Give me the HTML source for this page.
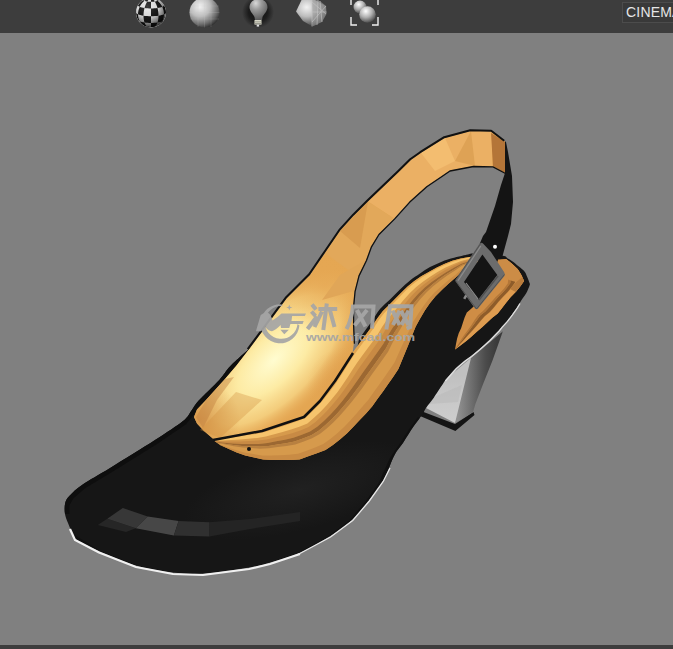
<!DOCTYPE html>
<html><head><meta charset="utf-8">
<style>
html,body{margin:0;padding:0;width:673px;height:649px;overflow:hidden;background:#808080;font-family:"Liberation Sans",sans-serif;}
#hdr{position:absolute;left:0;top:0;width:673px;height:33px;background:#3d3d3d;}
#ftr{position:absolute;left:0;top:645px;width:673px;height:4px;background:#3d3d3d;}
#cin{position:absolute;left:622px;top:2px;width:60px;height:21px;border:1px solid #4c4c4c;background:#393939;box-sizing:border-box;}
#cint{position:absolute;left:626px;top:4px;color:#e6e6e6;font-size:14px;line-height:16px;letter-spacing:0.2px;}
svg{position:absolute;left:0;top:0;}
</style></head><body>
<div id="hdr"></div>
<div id="cin"></div>
<div id="cint">CINEMA</div>
<div id="ftr"></div>
<svg width="673" height="649" viewBox="0 0 673 649">
<defs>
  <radialGradient id="ball" cx="0.35" cy="0.3" r="0.75">
    <stop offset="0" stop-color="#f2f2f2"/><stop offset="0.45" stop-color="#bdbdbd"/><stop offset="0.8" stop-color="#6a6a6a"/><stop offset="1" stop-color="#2e2e2e"/>
  </radialGradient>
  <radialGradient id="ball2" cx="0.4" cy="0.3" r="0.75">
    <stop offset="0" stop-color="#ffffff"/><stop offset="0.5" stop-color="#b0b0b0"/><stop offset="1" stop-color="#404040"/>
  </radialGradient>
  <radialGradient id="halo" cx="0.5" cy="0.5" r="0.5">
    <stop offset="0" stop-color="#101010"/><stop offset="0.6" stop-color="#1c1c1c"/><stop offset="1" stop-color="#3d3d3d"/>
  </radialGradient>
  <radialGradient id="lin" cx="274" cy="360" r="105" gradientUnits="userSpaceOnUse" gradientTransform="translate(274 360) rotate(-45) scale(1.1 0.52) translate(-274 -360)">
    <stop offset="0" stop-color="#fffcd0" stop-opacity="1"/><stop offset="0.4" stop-color="#fdeba4" stop-opacity="1"/><stop offset="0.72" stop-color="#f7d686" stop-opacity="0.8"/><stop offset="1" stop-color="#eab260" stop-opacity="0"/>
  </radialGradient>
  <linearGradient id="heelL" x1="0" y1="375" x2="0" y2="420" gradientUnits="userSpaceOnUse">
    <stop offset="0" stop-color="#c0c0c0"/><stop offset="0.5" stop-color="#c8c8c8"/><stop offset="1" stop-color="#cdcdcd"/>
  </linearGradient>
  <linearGradient id="heelD" x1="458" y1="0" x2="497" y2="0" gradientUnits="userSpaceOnUse">
    <stop offset="0" stop-color="#909090"/><stop offset="0.35" stop-color="#6e6e6e"/><stop offset="0.7" stop-color="#4c4c4c"/><stop offset="1" stop-color="#3a3a3a"/>
  </linearGradient>
  <clipPath id="bodyclip"><path d="M297.5,290.0 C297.5,290.0 249.0,349.0 249.0,349.0 C249.0,349.0 235.3,360.9 230.4,366.0 C225.5,371.1 224.6,374.1 219.3,379.9 C214.0,385.7 203.1,395.6 198.5,400.7 C193.9,405.8 194.1,407.0 191.5,410.4 C188.9,413.8 189.1,416.1 183.0,421.0 C176.9,425.9 167.1,432.2 155.0,440.0 C142.9,447.8 122.5,460.3 110.5,467.7 C98.5,475.1 89.5,479.8 82.7,484.4 C75.9,489.0 72.7,492.4 69.8,495.5 C66.9,498.6 66.0,499.9 65.2,503.0 C64.4,506.1 64.5,510.7 65.0,514.0 C65.5,517.3 66.7,519.7 68.0,523.0 C69.3,526.3 71.3,531.3 72.6,534.0 C73.9,536.7 71.6,536.2 76.0,539.0 C80.4,541.8 89.0,546.6 99.0,551.0 C109.0,555.4 123.7,561.9 136.0,565.5 C148.3,569.1 161.8,571.2 173.0,572.5 C184.2,573.8 190.3,574.3 203.0,573.5 C215.7,572.7 237.8,569.3 249.0,567.5 C260.2,565.7 261.5,565.0 270.0,562.5 C278.5,560.0 289.9,557.0 300.0,552.5 C310.1,548.0 321.7,541.3 330.5,535.8 C339.3,530.2 346.2,525.2 352.7,519.2 C359.2,513.2 364.2,506.3 369.3,499.8 C374.4,493.3 379.0,487.8 383.2,480.4 C387.4,473.0 390.9,461.8 394.3,455.4 C397.7,449.0 400.4,446.7 403.6,441.9 C406.8,437.1 410.2,431.3 413.3,426.8 C416.4,422.3 419.8,418.2 422.0,415.0 C424.2,411.8 424.3,410.3 426.3,407.4 C428.3,404.5 430.6,402.3 433.8,397.7 C437.0,393.1 445.4,380.0 445.4,380.0 C445.4,380.0 452.9,371.0 456.2,367.7 C459.5,364.4 462.7,362.1 465.3,360.0 C467.9,357.9 469.2,357.3 471.6,355.4 C474.1,353.5 476.9,351.1 480.0,348.5 C483.1,345.9 486.8,342.6 490.0,339.5 C493.2,336.4 497.2,332.1 499.2,330.0 C501.2,327.9 500.5,328.2 501.9,326.6 C503.3,325.0 505.8,322.5 507.5,320.4 C509.2,318.3 510.7,316.3 512.3,314.1 C513.9,311.9 515.7,309.5 517.2,307.2 C518.7,304.9 519.9,302.6 521.4,300.3 C522.9,298.0 524.8,295.9 526.2,293.3 C527.6,290.8 529.2,286.7 529.7,285.0 C530.2,283.3 529.9,284.4 529.5,283.0 C529.1,281.6 527.9,278.6 527.1,276.7 C526.3,274.8 526.1,273.4 524.7,271.7 C523.3,269.9 520.6,267.9 518.5,266.2 C516.4,264.4 514.1,262.5 512.3,261.2 C510.4,259.9 509.0,259.1 507.4,258.2 C505.8,257.3 507.9,256.5 502.5,255.7 C497.1,254.9 480.8,253.7 475.0,253.5 C469.2,253.3 472.0,253.6 467.8,254.5 C463.6,255.4 454.6,257.5 450.0,258.8 C445.4,260.1 443.3,261.1 440.0,262.5 C436.7,263.9 433.3,265.3 430.0,267.1 C426.7,268.9 423.3,271.3 420.0,273.5 C416.7,275.7 413.3,277.8 410.0,280.5 C406.7,283.2 403.3,286.3 400.0,289.5 C396.7,292.7 393.3,296.2 390.0,299.5 C386.7,302.8 383.2,305.2 380.0,309.0 C376.8,312.8 374.3,317.8 371.0,322.5 C367.7,327.2 363.7,332.4 360.0,337.5 C356.3,342.6 359.4,360.9 349.0,353.0 C338.6,345.1 297.5,290.0 297.5,290.0Z"/></clipPath>
  <radialGradient id="shade" cx="0.38" cy="0.3" r="0.75">
    <stop offset="0" stop-color="#ffffff" stop-opacity="0.15"/><stop offset="0.45" stop-color="#000" stop-opacity="0.1"/><stop offset="0.8" stop-color="#000" stop-opacity="0.55"/><stop offset="1" stop-color="#000" stop-opacity="0.85"/>
  </radialGradient>
  <radialGradient id="bulb" cx="0.35" cy="0.2" r="0.8">
    <stop offset="0" stop-color="#d8d8d8"/><stop offset="0.4" stop-color="#9a9a9a"/><stop offset="1" stop-color="#5a5a5a"/>
  </radialGradient>
  <radialGradient id="bodyhl" cx="0.5" cy="0.5" r="0.5">
    <stop offset="0" stop-color="#222" stop-opacity="0.9"/><stop offset="1" stop-color="#222" stop-opacity="0"/>
  </radialGradient>
  <clipPath id="linclip"><polygon points="215.0,440.5 203.5,430.5 197.0,423.5 194.0,417.0 197.0,409.5 206.5,399.5 225.0,379.0 236.5,365.5 248.5,350.0 273.0,317.0 287.0,298.0 310.0,275.0 325.0,253.0 340.0,231.0 354.0,215.5 368.0,201.6 398.6,172.3 411.0,160.0 421.0,153.0 445.0,138.0 471.0,131.0 492.0,131.5 505.0,141.5 505.0,173.0 492.5,166.4 473.0,166.0 449.5,170.5 440.0,177.0 426.3,186.2 409.3,201.6 394.0,218.6 378.5,234.0 371.0,246.3 366.0,260.0 358.5,275.4 354.6,290.8 353.1,306.2 353.1,324.7 353.9,343.2 352.0,357.0 335.4,380.8 320.0,400.9 304.2,416.8 261.7,431.5 215.0,440.5"/></clipPath>
  <radialGradient id="shTop" cx="0.5" cy="0.5" r="0.5"><stop offset="0" stop-color="#e6a854" stop-opacity="0.75"/><stop offset="1" stop-color="#e6a854" stop-opacity="0"/></radialGradient>
  <radialGradient id="shLL" cx="0.5" cy="0.5" r="0.5"><stop offset="0" stop-color="#d4944a" stop-opacity="0.8"/><stop offset="1" stop-color="#d4944a" stop-opacity="0"/></radialGradient>
  <radialGradient id="shR" cx="0.5" cy="0.5" r="0.5"><stop offset="0" stop-color="#e0a050" stop-opacity="0.7"/><stop offset="1" stop-color="#e0a050" stop-opacity="0"/></radialGradient>
  <clipPath id="ckb"><circle cx="151" cy="12.5" r="15"/></clipPath>
</defs>

<!-- ===== toolbar icons ===== -->
<g clip-path="url(#ckb)">
  <rect x="134" y="-4" width="34" height="34" fill="#f0f0f0"/>
  <g fill="#1c1c1c"><polygon points="151.00,27.03 151.00,27.03 151.00,27.03 151.00,27.03 151.00,27.03 151.00,27.03 149.30,27.15 147.64,27.02 146.03,26.64 144.50,26.01 144.50,26.01 144.07,25.80 143.76,25.57 143.56,25.33 143.50,25.09 143.50,25.09 145.26,25.93 147.12,26.54 149.04,26.91 151.00,27.03"/>
<polygon points="138.01,19.77 138.12,20.19 138.45,20.60 139.00,21.00 139.75,21.37 139.75,21.37 139.00,19.78 138.45,18.05 138.12,16.24 138.01,14.36 138.01,14.36 137.14,13.92 136.51,13.46 136.13,12.98 136.00,12.50 136.00,12.50 136.13,14.40 136.51,16.26 137.14,18.06 138.01,19.77"/>
<polygon points="138.01,5.23 138.12,5.65 138.45,6.06 139.00,6.46 139.75,6.84 139.75,6.84 140.69,5.12 141.81,3.54 143.09,2.10 144.50,0.84 144.50,0.84 144.07,0.62 143.76,0.39 143.56,0.16 143.50,-0.09 143.50,-0.09 141.87,0.97 140.39,2.22 139.10,3.65 138.01,5.23"/>
<polygon points="144.50,26.01 145.05,26.22 145.70,26.40 146.43,26.56 147.25,26.69 147.25,26.69 146.43,25.99 145.70,25.05 145.05,23.90 144.50,22.55 144.50,22.55 143.09,22.32 141.81,22.04 140.69,21.72 139.75,21.37 139.75,21.37 140.69,22.82 141.81,24.09 143.09,25.16 144.50,26.01"/>
<polygon points="138.01,14.36 139.10,14.76 140.39,15.12 141.87,15.44 143.50,15.71 143.50,15.71 143.56,13.79 143.76,11.84 144.07,9.91 144.50,8.02 144.50,8.02 143.09,7.78 141.81,7.51 140.69,7.19 139.75,6.84 139.75,6.84 139.00,8.65 138.45,10.53 138.12,12.44 138.01,14.36"/>
<polygon points="144.50,0.84 145.05,1.04 145.70,1.23 146.43,1.39 147.25,1.52 147.25,1.52 148.13,0.30 149.06,-0.71 150.02,-1.49 151.00,-2.03 151.00,-2.03 151.00,-2.03 151.00,-2.03 151.00,-2.03 151.00,-2.03 151.00,-2.03 149.30,-1.67 147.64,-1.06 146.03,-0.22 144.50,0.84"/>
<polygon points="151.00,27.03 151.00,27.03 151.00,27.03 151.00,27.03 151.00,27.03 151.00,27.03 151.00,27.39 151.00,27.50 151.00,27.35 151.00,26.94 151.00,26.94 150.02,26.93 149.06,26.88 148.13,26.80 147.25,26.69 147.25,26.69 148.13,27.16 149.06,27.37 150.02,27.33 151.00,27.03"/>
<polygon points="144.50,22.55 146.03,22.74 147.64,22.87 149.30,22.95 151.00,22.98 151.00,22.98 151.00,21.49 151.00,19.85 151.00,18.08 151.00,16.21 151.00,16.21 149.04,16.18 147.12,16.08 145.26,15.93 143.50,15.71 143.50,15.71 143.56,17.58 143.76,19.37 144.07,21.03 144.50,22.55"/>
<polygon points="144.50,8.02 146.03,8.20 147.64,8.34 149.30,8.42 151.00,8.45 151.00,8.45 151.00,6.60 151.00,4.85 151.00,3.23 151.00,1.77 151.00,1.77 150.02,1.75 149.06,1.71 148.13,1.63 147.25,1.52 147.25,1.52 146.43,2.93 145.70,4.50 145.05,6.20 144.50,8.02"/>
<polygon points="151.00,26.94 151.98,26.93 152.94,26.88 153.87,26.80 154.75,26.69 154.75,26.69 155.57,25.99 156.30,25.05 156.95,23.90 157.50,22.55 157.50,22.55 155.97,22.74 154.36,22.87 152.70,22.95 151.00,22.98 151.00,22.98 151.00,24.29 151.00,25.40 151.00,26.29 151.00,26.94"/>
<polygon points="151.00,16.21 152.96,16.18 154.88,16.08 156.74,15.93 158.50,15.71 158.50,15.71 158.44,13.79 158.24,11.84 157.93,9.91 157.50,8.02 157.50,8.02 155.97,8.20 154.36,8.34 152.70,8.42 151.00,8.45 151.00,8.45 151.00,10.37 151.00,12.32 151.00,14.28 151.00,16.21"/>
<polygon points="151.00,1.77 151.98,1.75 152.94,1.71 153.87,1.63 154.75,1.52 154.75,1.52 153.87,0.30 152.94,-0.71 151.98,-1.49 151.00,-2.03 151.00,-2.03 151.00,-2.03 151.00,-2.03 151.00,-2.03 151.00,-2.03 151.00,-2.03 151.00,-1.42 151.00,-0.58 151.00,0.49 151.00,1.77"/>
<polygon points="151.00,27.03 151.00,27.03 151.00,27.03 151.00,27.03 151.00,27.03 151.00,27.03 152.70,27.15 154.36,27.02 155.97,26.64 157.50,26.01 157.50,26.01 156.95,26.22 156.30,26.40 155.57,26.56 154.75,26.69 154.75,26.69 153.87,27.16 152.94,27.37 151.98,27.33 151.00,27.03"/>
<polygon points="157.50,22.55 158.91,22.32 160.19,22.04 161.31,21.72 162.25,21.37 162.25,21.37 163.00,19.78 163.55,18.05 163.88,16.24 163.99,14.36 163.99,14.36 162.90,14.76 161.61,15.12 160.13,15.44 158.50,15.71 158.50,15.71 158.44,17.58 158.24,19.37 157.93,21.03 157.50,22.55"/>
<polygon points="157.50,8.02 158.91,7.78 160.19,7.51 161.31,7.19 162.25,6.84 162.25,6.84 161.31,5.12 160.19,3.54 158.91,2.10 157.50,0.84 157.50,0.84 156.95,1.04 156.30,1.23 155.57,1.39 154.75,1.52 154.75,1.52 155.57,2.93 156.30,4.50 156.95,6.20 157.50,8.02"/>
<polygon points="157.50,26.01 157.93,25.80 158.24,25.57 158.44,25.33 158.50,25.09 158.50,25.09 160.13,24.03 161.61,22.78 162.90,21.35 163.99,19.77 163.99,19.77 163.88,20.19 163.55,20.60 163.00,21.00 162.25,21.37 162.25,21.37 161.31,22.82 160.19,24.09 158.91,25.16 157.50,26.01"/>
<polygon points="163.99,14.36 164.86,13.92 165.49,13.46 165.87,12.98 166.00,12.50 166.00,12.50 165.87,10.60 165.49,8.74 164.86,6.94 163.99,5.23 163.99,5.23 163.88,5.65 163.55,6.06 163.00,6.46 162.25,6.84 162.25,6.84 163.00,8.65 163.55,10.53 163.88,12.44 163.99,14.36"/>
<polygon points="157.50,0.84 157.93,0.62 158.24,0.39 158.44,0.16 158.50,-0.09 158.50,-0.09 156.74,-0.93 154.88,-1.54 152.96,-1.91 151.00,-2.03 151.00,-2.03 151.00,-2.03 151.00,-2.03 151.00,-2.03 151.00,-2.03 151.00,-2.03 152.70,-1.67 154.36,-1.06 155.97,-0.22 157.50,0.84"/></g>
  <circle cx="151" cy="12.5" r="15" fill="url(#shade)"/>
</g>
<circle cx="204.5" cy="12.5" r="15" fill="url(#ball)"/>
<g stroke="#c8c8c8" stroke-width="0.5" fill="none" opacity="0.35">
  <path d="M190,6 H219 M189.5,12.5 H219.5 M190,19 H219 M198,-2 V27 M204.5,-2.5 V27.5 M211,-2 V27"/>
</g>
<circle cx="258" cy="12" r="16" fill="url(#halo)"/>
<path d="M258.5,-1 C264,-1 267.5,3 267.5,7 C267.5,11 264,14 262.5,17 L262,20 L255,20 L254.5,17 C253,14 249.5,11 249.5,7 C249.5,3 253,-1 258.5,-1 Z" fill="url(#bulb)"/>
<rect x="254.5" y="20" width="7" height="4.6" fill="#d8d8c8"/>
<rect x="254.5" y="21.5" width="7" height="0.8" fill="#8a8a80"/><rect x="254.5" y="23" width="7" height="0.8" fill="#8a8a80"/>
<rect x="256.7" y="24.6" width="2.4" height="2" fill="#e0e0e0"/>
<polygon points="302,-1 313,-1 326,6 326.5,14 322,22 312.5,26.5 303,21 296,11.5" fill="url(#ball)"/>
<polygon points="312,-1 320,1 326,6 326.5,14 322,22 312.5,26.5" fill="#9a9a9a" opacity="0.6"/>
<g stroke="#c4c4c4" stroke-width="0.7" fill="none" opacity="0.9">
  <path d="M312,-1 V26.5 M312,12 H326.5 M312,2 L326,14 M312,22 L326,6 M318,0 L317,25 M320,1 L322,22"/>
</g>
<g stroke="#f0f0f0" stroke-width="1.4" fill="none">
  <path d="M351,0 V5 M378,0 V5 M351,17 V25 H357 M378,17 V25 H372"/>
</g>
<circle cx="360" cy="7" r="6.5" fill="url(#ball2)"/>
<circle cx="367.5" cy="14.5" r="8.3" fill="url(#ball2)"/>

<!-- ===== heel ===== -->
<polygon points="421,411 455,424 473.5,412 474.5,415 455.4,431 420,416" fill="#141414"/>
<polygon points="445,380 472,357 503,331 455,423 426,408" fill="url(#heelL)"/>
<polygon fill="#b8b8b8" opacity="0.5" points="432,398 462,385 458,402 428,404"/>
<polygon points="471,358 503,331 492.4,360.8 483.1,383.9 475.4,404 473.1,412 455,423" fill="url(#heelD)"/>

<!-- ===== black body ===== -->
<path fill="#161616" d="M297.5,290.0 C297.5,290.0 249.0,349.0 249.0,349.0 C249.0,349.0 235.3,360.9 230.4,366.0 C225.5,371.1 224.6,374.1 219.3,379.9 C214.0,385.7 203.1,395.6 198.5,400.7 C193.9,405.8 194.1,407.0 191.5,410.4 C188.9,413.8 189.1,416.1 183.0,421.0 C176.9,425.9 167.1,432.2 155.0,440.0 C142.9,447.8 122.5,460.3 110.5,467.7 C98.5,475.1 89.5,479.8 82.7,484.4 C75.9,489.0 72.7,492.4 69.8,495.5 C66.9,498.6 66.0,499.9 65.2,503.0 C64.4,506.1 64.5,510.7 65.0,514.0 C65.5,517.3 66.7,519.7 68.0,523.0 C69.3,526.3 71.3,531.3 72.6,534.0 C73.9,536.7 71.6,536.2 76.0,539.0 C80.4,541.8 89.0,546.6 99.0,551.0 C109.0,555.4 123.7,561.9 136.0,565.5 C148.3,569.1 161.8,571.2 173.0,572.5 C184.2,573.8 190.3,574.3 203.0,573.5 C215.7,572.7 237.8,569.3 249.0,567.5 C260.2,565.7 261.5,565.0 270.0,562.5 C278.5,560.0 289.9,557.0 300.0,552.5 C310.1,548.0 321.7,541.3 330.5,535.8 C339.3,530.2 346.2,525.2 352.7,519.2 C359.2,513.2 364.2,506.3 369.3,499.8 C374.4,493.3 379.0,487.8 383.2,480.4 C387.4,473.0 390.9,461.8 394.3,455.4 C397.7,449.0 400.4,446.7 403.6,441.9 C406.8,437.1 410.2,431.3 413.3,426.8 C416.4,422.3 419.8,418.2 422.0,415.0 C424.2,411.8 424.3,410.3 426.3,407.4 C428.3,404.5 430.6,402.3 433.8,397.7 C437.0,393.1 445.4,380.0 445.4,380.0 C445.4,380.0 452.9,371.0 456.2,367.7 C459.5,364.4 462.7,362.1 465.3,360.0 C467.9,357.9 469.2,357.3 471.6,355.4 C474.1,353.5 476.9,351.1 480.0,348.5 C483.1,345.9 486.8,342.6 490.0,339.5 C493.2,336.4 497.2,332.1 499.2,330.0 C501.2,327.9 500.5,328.2 501.9,326.6 C503.3,325.0 505.8,322.5 507.5,320.4 C509.2,318.3 510.7,316.3 512.3,314.1 C513.9,311.9 515.7,309.5 517.2,307.2 C518.7,304.9 519.9,302.6 521.4,300.3 C522.9,298.0 524.8,295.9 526.2,293.3 C527.6,290.8 529.2,286.7 529.7,285.0 C530.2,283.3 529.9,284.4 529.5,283.0 C529.1,281.6 527.9,278.6 527.1,276.7 C526.3,274.8 526.1,273.4 524.7,271.7 C523.3,269.9 520.6,267.9 518.5,266.2 C516.4,264.4 514.1,262.5 512.3,261.2 C510.4,259.9 509.0,259.1 507.4,258.2 C505.8,257.3 507.9,256.5 502.5,255.7 C497.1,254.9 480.8,253.7 475.0,253.5 C469.2,253.3 472.0,253.6 467.8,254.5 C463.6,255.4 454.6,257.5 450.0,258.8 C445.4,260.1 443.3,261.1 440.0,262.5 C436.7,263.9 433.3,265.3 430.0,267.1 C426.7,268.9 423.3,271.3 420.0,273.5 C416.7,275.7 413.3,277.8 410.0,280.5 C406.7,283.2 403.3,286.3 400.0,289.5 C396.7,292.7 393.3,296.2 390.0,299.5 C386.7,302.8 383.2,305.2 380.0,309.0 C376.8,312.8 374.3,317.8 371.0,322.5 C367.7,327.2 363.7,332.4 360.0,337.5 C356.3,342.6 359.4,360.9 349.0,353.0 C338.6,345.1 297.5,290.0 297.5,290.0Z"/>
<g clip-path="url(#bodyclip)">
<ellipse cx="300" cy="490" rx="120" ry="40" fill="url(#bodyhl)" transform="rotate(-15 300 490)"/>
<path fill="none" stroke="#0f0f0f" stroke-width="10" opacity="0.8" d="M70,538 L99,556 L136,570.5 L173,577.5 L203,578.5 L249,572.5 L270,567.5 L300,557.5 L330.5,540.8 L352.7,524.2 L369.3,504.8 L383.2,485.4 L394.3,460.4 L403.6,446.9 L413.3,431.8 L422,420"/>
<path fill="none" stroke="#0e0e0e" stroke-width="9" d="M250,345 L219.3,379.9 L191.5,410.4 L183,421 L155,440 L110.5,467.7 L82.7,484.4 L69.8,495.5 L65,504 L65,514"/></g>
<!-- sole white line -->
<polyline fill="none" stroke="#f0f0f0" stroke-width="2.2" points="70,529 75,540 99,552.5 136,567 173,574 203,575 249,569 270,564 300,554"/>
<polyline fill="none" stroke="#e8e8e8" stroke-width="1.3" points="298,554.5 330.5,537 352.7,520.5 369.3,501 383.2,481.5 390,468"/>
<polyline fill="none" stroke="#e0e0e0" stroke-width="1.3" points="445.4,381 456.2,368.7 465.3,361 471.6,356.4 480,349.5 490,340.5 499.2,331 501.9,327.6 507.5,321.4 512.3,315.1 517.2,308.2 520,303.5"/>
<!-- toe highlights -->
<polygon fill="#262626" points="107.3,518.7 135.8,528.2 126,532 97.8,525"/>
<polygon fill="#373737" points="122.8,508 147.7,516.4 135.8,528.2 107.3,518.7"/>
<polygon fill="#474747" points="147.7,516.4 178.6,521.1 173.9,535.4 135.8,528.2"/>
<polygon fill="#303030" points="178.6,521.1 209.5,522.3 209.5,536.6 173.9,535.4"/>
<polygon fill="#242424" points="209.5,522.3 250,519 300,512 300,521 250,529 209.5,536.6"/>

<!-- strap black -->
<polygon fill="#141414" points="491,131 506,142 508,152 512,176 513,202 511,224 508,236 502,258 475,255 483,236 486,232 495,206 501,185 505,173"/>

<!-- ===== lining + strap + near band ===== -->
<polygon fill="#e4a652" points="215.0,440.5 203.5,430.5 197.0,423.5 194.0,417.0 197.0,409.5 206.5,399.5 225.0,379.0 236.5,365.5 248.5,350.0 273.0,317.0 287.0,298.0 310.0,275.0 325.0,253.0 340.0,231.0 354.0,215.5 368.0,201.6 398.6,172.3 411.0,160.0 421.0,153.0 445.0,138.0 471.0,131.0 492.0,131.5 505.0,141.5 505.0,173.0 492.5,166.4 473.0,166.0 449.5,170.5 440.0,177.0 426.3,186.2 409.3,201.6 394.0,218.6 378.5,234.0 371.0,246.3 366.0,260.0 358.5,275.4 354.6,290.8 353.1,306.2 353.1,324.7 353.9,343.2 352.0,357.0 335.4,380.8 320.0,400.9 304.2,416.8 261.7,431.5 215.0,440.5"/>
<polygon fill="url(#lin)" points="215.0,440.5 203.5,430.5 197.0,423.5 194.0,417.0 197.0,409.5 206.5,399.5 225.0,379.0 236.5,365.5 248.5,350.0 273.0,317.0 287.0,298.0 310.0,275.0 325.0,253.0 340.0,231.0 354.0,215.5 368.0,201.6 398.6,172.3 411.0,160.0 421.0,153.0 445.0,138.0 471.0,131.0 492.0,131.5 505.0,141.5 505.0,173.0 492.5,166.4 473.0,166.0 449.5,170.5 440.0,177.0 426.3,186.2 409.3,201.6 394.0,218.6 378.5,234.0 371.0,246.3 366.0,260.0 358.5,275.4 354.6,290.8 353.1,306.2 353.1,324.7 353.9,343.2 352.0,357.0 335.4,380.8 320.0,400.9 304.2,416.8 261.7,431.5 215.0,440.5"/>
<g clip-path="url(#linclip)">
  <circle cx="325" cy="285" r="50" fill="url(#shTop)"/>
  <circle cx="200" cy="420" r="40" fill="url(#shLL)"/>
  <circle cx="345" cy="385" r="38" fill="url(#shR)"/>
</g>
<g><polygon fill="#d69a4c" points="212.7,439.7 221.3,438.3 229.9,436.8 238.5,435.4 247.1,433.9 255.7,432.5 264.2,430.6 272.4,427.8 280.6,425.0 288.9,422.1 297.1,419.3 305.0,415.9 311.2,409.8 317.3,403.6 323.0,397.0 328.3,390.1 333.6,383.2 338.4,375.9 342.9,368.4 347.4,361.0 352.0,353.6 357.2,346.6 362.3,339.5 367.5,332.5 372.6,325.5 377.4,318.2 382.7,311.3 388.8,305.2 395.0,299.0 401.2,292.8 407.3,286.7 414.0,281.2 421.2,276.3 428.8,271.9 436.4,267.7 444.2,263.9 452.4,260.8 460.8,258.5 469.3,256.9 478.0,256.0 478.0,262.0 470.0,266.5 462.0,271.0 455.7,277.5 448.7,283.5 442.0,289.7 435.5,296.2 429.8,303.2 424.7,310.8 420.0,318.7 415.6,326.7 412.2,335.2 408.8,343.7 405.3,352.2 401.8,360.7 398.4,369.1 393.3,376.7 388.0,384.2 382.8,391.7 377.4,399.1 372.1,406.5 366.0,413.4 359.7,420.1 353.4,426.7 347.1,433.3 340.2,439.3 332.9,444.9 325.5,450.1 316.9,453.2 308.3,456.3 299.6,459.4 290.6,460.0 281.4,460.0 272.3,460.0 263.2,459.6 254.2,457.6 245.3,455.6 236.7,452.4 228.3,448.8 220.0,445.0"/>
<polygon fill="#e0a450" points="212.7,439.7 221.3,438.3 229.9,436.8 238.5,435.4 247.1,433.9 255.7,432.5 264.2,430.6 272.4,427.8 280.6,425.0 288.9,422.1 297.1,419.3 305.0,415.9 311.2,409.8 317.3,403.6 323.0,397.0 328.3,390.1 333.6,383.2 338.4,375.9 342.9,368.4 347.4,361.0 352.0,353.6 357.2,346.6 362.3,339.5 367.5,332.5 372.6,325.5 377.4,318.2 382.7,311.3 388.8,305.2 395.0,299.0 401.2,292.8 407.3,286.7 414.0,281.2 421.2,276.3 428.8,271.9 436.4,267.7 444.2,263.9 452.4,260.8 460.8,258.5 469.3,256.9 478.0,256.0 478.0,256.3 469.4,257.3 460.8,259.2 452.5,261.7 444.5,264.9 436.7,268.8 429.1,273.1 421.7,277.6 414.6,282.7 408.0,288.3 401.9,294.5 395.9,300.8 389.8,307.1 383.8,313.4 378.6,320.3 373.9,327.7 368.8,334.7 363.6,341.8 358.5,348.8 353.3,355.9 348.6,363.2 344.0,370.7 339.4,378.1 334.6,385.3 329.2,392.2 323.9,399.1 318.1,405.6 311.9,411.8 305.6,417.8 297.7,421.1 289.4,424.0 281.1,426.7 272.8,429.4 264.6,432.1 256.0,433.9 247.4,435.1 238.8,436.4 230.2,437.6 221.6,438.8 213.1,440.0"/>
<polygon fill="#f6c46c" points="213.1,440.0 221.6,438.8 230.2,437.6 238.8,436.4 247.4,435.1 256.0,433.9 264.6,432.1 272.8,429.4 281.1,426.7 289.4,424.0 297.7,421.1 305.6,417.8 311.9,411.8 318.1,405.6 323.9,399.1 329.2,392.2 334.6,385.3 339.4,378.1 344.0,370.7 348.6,363.2 353.3,355.9 358.5,348.8 363.6,341.8 368.8,334.7 373.9,327.7 378.6,320.3 383.8,313.4 389.8,307.1 395.9,300.8 401.9,294.5 408.0,288.3 414.6,282.7 421.7,277.6 429.1,273.1 436.7,268.8 444.5,264.9 452.5,261.7 460.8,259.2 469.4,257.3 478.0,256.3 478.0,257.2 469.5,258.8 461.0,261.0 453.0,264.2 445.1,267.8 437.5,272.1 430.1,276.8 422.9,281.7 416.2,287.1 409.9,293.1 404.0,299.6 398.4,306.2 392.8,312.9 387.2,319.5 382.2,326.7 377.8,334.2 372.7,341.4 367.5,348.5 362.3,355.6 357.1,362.7 352.3,370.1 347.5,377.4 342.6,384.7 337.6,391.9 332.1,398.7 326.4,405.4 320.5,411.8 314.0,417.8 307.4,423.4 299.3,426.7 291.0,429.6 282.6,432.0 274.2,434.2 265.8,436.5 257.2,437.9 248.5,438.7 239.9,439.4 231.3,439.9 222.7,440.4 214.2,440.8"/>
<polygon fill="#c88a44" points="214.9,441.3 223.4,441.4 231.9,441.5 240.5,441.4 249.2,441.0 257.9,440.6 266.6,439.5 275.1,437.5 283.6,435.5 292.1,433.3 300.4,430.4 308.6,427.1 315.5,421.9 322.0,416.0 328.1,409.7 333.9,403.0 339.5,396.2 344.8,389.1 349.8,381.9 354.8,374.6 359.6,367.3 364.9,360.1 370.0,352.9 375.2,345.8 380.4,338.6 384.7,330.9 389.5,323.6 394.8,316.7 400.1,309.9 405.5,303.0 411.1,296.3 417.2,290.1 423.8,284.4 430.8,279.2 438.1,274.3 445.6,269.8 453.4,265.8 461.2,262.3 469.5,259.7 478.0,257.8 478.0,258.5 469.6,260.9 461.3,263.8 453.8,267.8 446.1,272.2 438.8,276.9 431.6,282.1 424.8,287.6 418.5,293.6 412.7,300.1 407.2,307.1 402.2,314.2 397.2,321.4 392.2,328.5 387.6,336.0 383.4,343.8 378.3,351.1 373.1,358.3 367.9,365.5 362.7,372.7 357.7,380.1 352.6,387.3 347.3,394.4 341.9,401.4 336.2,408.2 330.2,414.7 323.9,420.9 317.2,426.7 310.0,431.6 301.8,434.8 293.4,437.8 284.8,439.7 276.2,441.3 267.6,443.0 258.8,443.9 250.1,443.9 241.4,443.9 232.8,443.4 224.2,442.7 215.8,441.9"/>
<polygon fill="#9c6832" points="215.8,441.9 224.2,442.7 232.8,443.4 241.4,443.9 250.1,443.9 258.8,443.9 267.6,443.0 276.2,441.3 284.8,439.7 293.4,437.8 301.8,434.8 310.0,431.6 317.2,426.7 323.9,420.9 330.2,414.7 336.2,408.2 341.9,401.4 347.3,394.4 352.6,387.3 357.7,380.1 362.7,372.7 367.9,365.5 373.1,358.3 378.3,351.1 383.4,343.8 387.6,336.0 392.2,328.5 397.2,321.4 402.2,314.2 407.2,307.1 412.7,300.1 418.5,293.6 424.8,287.6 431.6,282.1 438.8,276.9 446.1,272.2 453.8,267.8 461.3,263.8 469.6,260.9 478.0,258.5 478.0,259.1 469.7,261.9 461.4,265.0 454.1,269.5 446.6,274.1 439.3,279.1 432.3,284.5 425.7,290.3 419.6,296.6 413.9,303.3 408.6,310.5 403.9,317.8 399.2,325.2 394.4,332.6 390.1,340.3 386.0,348.2 380.9,355.5 375.7,362.8 370.5,370.0 365.2,377.3 360.2,384.7 354.9,391.8 349.5,398.9 343.9,405.8 338.1,412.6 331.9,419.0 325.4,425.1 318.6,430.7 311.2,435.3 302.9,438.5 294.5,441.5 285.8,443.2 277.1,444.5 268.4,445.9 259.6,446.6 250.8,446.2 242.0,445.9 233.4,444.9 224.9,443.8 216.5,442.5"/>
<polygon fill="#b88040" points="216.5,442.5 224.9,443.8 233.4,444.9 242.0,445.9 250.8,446.2 259.6,446.6 268.4,445.9 277.1,444.5 285.8,443.2 294.5,441.5 302.9,438.5 311.2,435.3 318.6,430.7 325.4,425.1 331.9,419.0 338.1,412.6 343.9,405.8 349.5,398.9 354.9,391.8 360.2,384.7 365.2,377.3 370.5,370.0 375.7,362.8 380.9,355.5 386.0,348.2 390.1,340.3 394.4,332.6 399.2,325.2 403.9,317.8 408.6,310.5 413.9,303.3 419.6,296.6 425.7,290.3 432.3,284.5 439.3,279.1 446.6,274.1 454.1,269.5 461.4,265.0 469.7,261.9 478.0,259.1 478.0,259.6 469.7,262.6 461.5,266.0 454.3,270.9 446.9,275.7 439.8,280.9 432.8,286.5 426.4,292.5 420.4,299.0 414.9,305.9 409.8,313.2 405.3,320.7 400.8,328.3 396.3,335.8 392.0,343.7 388.1,351.7 383.0,359.0 377.8,366.3 372.5,373.6 367.3,380.9 362.2,388.3 356.7,395.4 351.2,402.4 345.5,409.3 339.6,416.0 333.3,422.4 326.7,428.4 319.8,433.9 312.1,438.3 303.8,441.5 295.3,444.5 286.6,446.0 277.8,447.1 269.0,448.3 260.2,448.8 251.4,448.1 242.6,447.5 234.0,446.2 225.5,444.6 217.1,442.9"/>
<polygon fill="#c98b44" points="218.9,444.2 227.3,447.2 235.7,450.1 244.3,452.5 253.2,454.0 262.1,455.5 271.1,455.6 280.1,455.2 289.1,454.7 298.0,453.8 306.6,450.7 315.1,447.6 323.3,444.0 330.6,438.7 337.6,432.9 344.3,426.8 350.5,420.2 356.5,413.4 362.5,406.6 368.4,399.7 373.6,392.3 378.9,384.9 384.2,377.5 389.4,370.1 394.5,362.6 398.2,354.3 401.9,346.1 405.8,337.9 409.6,329.8 413.4,321.6 418.1,313.9 423.1,306.4 428.5,299.2 434.5,292.5 441.2,286.4 448.1,280.6 455.2,275.0 461.9,269.1 469.9,265.0 478.0,261.1 478.0,262.0 470.0,266.5 462.0,271.0 455.7,277.5 448.7,283.5 442.0,289.7 435.5,296.2 429.8,303.2 424.7,310.8 420.0,318.7 415.6,326.7 412.2,335.2 408.8,343.7 405.3,352.2 401.8,360.7 398.4,369.1 393.3,376.7 388.0,384.2 382.8,391.7 377.4,399.1 372.1,406.5 366.0,413.4 359.7,420.1 353.4,426.7 347.1,433.3 340.2,439.3 332.9,444.9 325.5,450.1 316.9,453.2 308.3,456.3 299.6,459.4 290.6,460.0 281.4,460.0 272.3,460.0 263.2,459.6 254.2,457.6 245.3,455.6 236.7,452.4 228.3,448.8 220.0,445.0"/></g>
<!-- strap facets -->
<g>
<polygon fill="#ebb064" points="368,201.6 398.6,172.3 411,160 421,153 445,138 471,131 492,131.5 492.5,166.4 473,166 449.5,170.5 440,177 426.3,186.2 409.3,201.6 394,218.6"/>
<polygon fill="#f3bd70" points="421,153 445,138 455,161 435,171"/>
<polygon fill="#dea255" points="455,161 471,131 475,166"/>
<polygon fill="#e2a85a" points="325,253 340,231 354,215.5 368,201.6 394,218.6 378.5,234 371,246.3 366,260 355,275"/>
<polygon fill="#d89c50" points="340,231 368,201.6 360,248"/>
<polygon fill="#e0a658" points="354.6,290.8 358.5,275.4 366,260 340,275 322,300"/>
<polygon fill="#c08040" opacity="0.45" points="196,417 206.5,399.5 225,379 234,377 217,400 203,428"/>
<polygon fill="#d09040" opacity="0.35" points="200,430 236,392 262,400 220,438"/>

</g>
<!-- band stripes -->

<!-- strap end face -->
<polygon fill="#b47538" points="491,133 505,142 505,173 493,166"/>
<!-- far band -->
<g><polygon fill="#cf8d45" points="500.0,260.0 506.8,259.6 512.2,263.9 517.3,268.7 521.0,274.6 524.0,280.9 520.1,286.6 515.7,292.0 510.8,297.0 506.3,302.4 502.1,308.0 497.8,313.4 492.3,317.7 487.2,322.5 482.1,327.3 476.8,331.8 471.6,336.4 466.3,341.0 460.7,345.2 455.1,349.4 455.0,349.4 456.0,343.9 457.1,338.5 458.7,333.2 461.1,328.2 462.8,322.9 464.6,317.6 466.8,312.5 470.9,309.0 475.0,305.3 479.1,301.4 483.1,297.6 487.1,293.8 491.0,289.8 494.5,285.5 498.0,281.2 501.5,276.8 501.7,272.1 499.3,267.0 497.0,262.0"/>
<polygon fill="#de9c50" points="500.0,260.0 506.8,259.6 512.2,263.9 517.3,268.7 521.0,274.6 524.0,280.9 520.1,286.6 515.7,292.0 510.8,297.0 506.3,302.4 502.1,308.0 497.8,313.4 492.3,317.7 487.2,322.5 482.1,327.3 476.8,331.8 471.6,336.4 466.3,341.0 460.7,345.2 455.1,349.4 455.1,349.4 459.4,344.9 463.7,340.3 468.0,335.5 472.4,330.8 476.7,326.1 480.9,321.1 485.1,316.3 490.2,312.2 494.5,307.2 498.7,302.1 503.0,297.2 507.7,292.5 511.9,287.5 515.7,282.2 514.6,276.4 512.9,271.0 509.3,266.2 504.7,261.7 499.2,260.6"/>
<polygon fill="#8e5c2a" points="499.1,260.6 504.5,261.8 509.0,266.4 512.5,271.2 514.1,276.5 515.1,282.3 511.4,287.6 507.1,292.6 502.5,297.2 498.2,302.1 494.0,307.2 489.7,312.1 484.6,316.2 480.4,321.0 476.3,326.0 472.1,330.7 467.7,335.5 463.5,340.3 459.3,344.8 455.1,349.4 455.1,349.4 458.5,344.6 462.1,339.9 465.7,334.9 469.6,330.1 473.2,325.3 476.8,320.3 480.5,315.3 485.4,311.4 489.7,306.7 493.8,302.0 498.0,297.3 502.5,292.8 506.7,288.1 510.4,283.0 510.4,277.6 510.0,272.5 507.4,267.7 503.3,263.0 498.6,260.9"/>
<polygon fill="#b27638" points="498.6,260.9 503.3,263.0 507.4,267.7 510.0,272.5 510.4,277.6 510.4,283.0 506.7,288.1 502.5,292.8 498.0,297.3 493.8,302.0 489.7,306.7 485.4,311.4 480.5,315.3 476.8,320.3 473.2,325.3 469.6,330.1 465.7,334.9 462.1,339.9 458.5,344.6 455.1,349.4 455.0,349.4 458.1,344.5 461.2,339.6 464.5,334.6 468.1,329.8 471.5,324.9 474.8,319.8 478.3,314.9 483.0,311.0 487.2,306.5 491.3,301.9 495.5,297.3 500.0,293.0 504.1,288.4 507.8,283.4 508.4,278.2 508.6,273.2 506.4,268.4 502.7,263.7 498.4,261.1"/></g>
<polygon fill="#cc8c46" points="498,259.5 506,259 512.3,264 518.5,270 522.5,277 516,282 509,280 503,276 497,265"/>
<polygon fill="#b97c3c" points="522.5,277 524,281 521.4,285 515.8,291.9 510,289 516,282"/>

<!-- rim outline + dark line -->
<polyline fill="none" stroke="#111" stroke-width="2.5" stroke-linejoin="round" points="353,353 335,381 320,401 304,417 262,431 213,440"/>
<!-- strap outlines -->
<polyline fill="none" stroke="#111" stroke-width="2" stroke-linejoin="round" points="247.7,349.2 272.2,316.2 286.2,297.2 309.2,274.2 324.2,252.2 339.2,230.2 353.2,214.7 367.2,200.8 397.8,171.5 410.2,159.2 420.2,152.2 444.2,137.2 470.2,130.2 491.2,130.7 504.2,140.7"/>
<polyline fill="none" stroke="#111" stroke-width="1.3" stroke-linejoin="round" points="505.5,173.5 493.0,166.9 473.5,166.5 450.0,171.0 440.5,177.5 426.8,186.7 409.8,202.1 394.5,219.1 379.0,234.5 371.5,246.8 366.5,260.5 359.0,275.9 355.1,291.3 353.6,306.7 353.6,325.2 354.4,343.7"/>
<circle cx="249" cy="449" r="2" fill="#111"/>

<!-- buckle -->
<polygon fill="#141414" points="482.4,254.5 464,281.9 478.3,299.6 497.3,275"/>
<path fill="#6c6c6c" fill-rule="evenodd" d="M479.5,243.5 Q481.5,242 483,243.5 L491,252 L504,272 Q505.5,274.5 504,276.5 L478,308.5 Q476.5,310 475,308.5 L456,282 Q454.8,280.6 456,279 Z M482.4,254.5 L464,281.9 L478.3,299.6 L497.3,275 Z"/>
<path fill="none" stroke="#8c8c8c" stroke-width="1.2" d="M458,280.6 L480.8,246 M466,283 L478,299"/>
<path fill="none" stroke="#4a4a4a" stroke-width="0.8" d="M481,243 L455.5,280.6 L476.5,309 L504.5,274.5"/>
<path fill="none" stroke="#505050" stroke-width="1.5" d="M498,276 L479,300"/>
<rect x="464" y="295" width="2.5" height="4" fill="#8a8a8a" transform="rotate(30 465 297)"/>
<circle cx="495" cy="246.7" r="2" fill="#fff"/>

<!-- ===== watermark ===== -->
<g fill="#a6a6a6" opacity="0.93">
  <path d="M281.7,304.4 A19.5,19.5 0 1,0 299.4,325.5 L297.5,323.9 A16.4,16.4 0 1,1 282.5,306.1 Z"/>
  <path d="M255.9,331.3 L260.7,315.1 Q263,312.5 268.3,313 Q271,314.5 272.5,320.4 Q277,318 281.5,313.6 L306,313.4 L304.8,315.9 L292.1,315.9 L291.5,320.9 L303.7,321.1 L302.6,323.9 L290.4,323.9 L289.3,328 L281,328 L280.6,325.1 Q276,330 272,331.3 Q267.5,330.5 265.4,327 L264,325.6 L261.3,331.3 Z"/>
  <path d="M280.4,329.7 L288.8,329.7 L284.3,334.2 Z"/>
  <path d="M289.3,304.5 L290.1,306.7 L292.3,307.5 L290.1,308.3 L289.3,310.5 L288.5,308.3 L286.3,307.5 L288.5,306.7 Z"/>
</g>
<g fill="none" stroke="#a6a6a6" stroke-width="4" stroke-linecap="butt" opacity="0.93">
  <path d="M312,304.5 L316,309.5 M311.5,311.5 L315.5,316 M307.5,329 L317,316.5 M318.4,309 H337.2 M326.8,303.5 L323.3,330 M322,311.5 L314.5,327 M330,310.5 L334.5,327"/>
  <path d="M346.5,329 Q351.5,320 353,306.6 H373.5 L372,328.5 M357,310 L365.5,326.5 M367,310 L354.5,325.5"/>
  <path d="M386.4,329.5 L390,306.3 H411.5 L410.2,327 L406.5,328.5 M392.5,310.7 L399.6,325 M399.6,310.7 L393,325 M401,310.7 L408.5,325 M408.5,310.7 L401.5,325"/>
</g>
<text x="306" y="340.8" font-family="Liberation Sans" font-weight="bold" font-size="11.5" fill="#a6a6a6" opacity="0.93" textLength="109" lengthAdjust="spacingAndGlyphs">www.mfcad.com</text>
</svg>
</body></html>
